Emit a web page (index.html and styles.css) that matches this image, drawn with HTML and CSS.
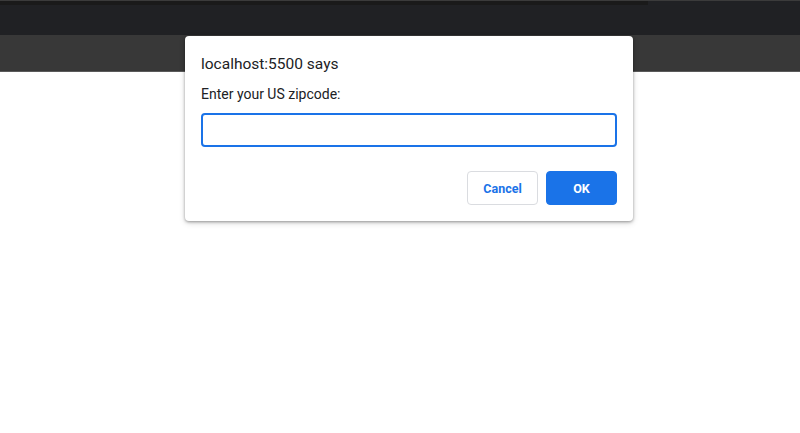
FILE: index.html
```html
<!DOCTYPE html>
<html>
<head>
<meta charset="utf-8">
<link rel="stylesheet" href="styles.css">
</head>
<body>
<div class="chrome">
  <div class="tabstrip"><div class="tabline"></div></div>
  <div class="toolbar"></div>
</div>
<div class="page"></div>
<div class="dialog">
  <div class="title">localhost:5500 says</div>
  <div class="message">Enter your US zipcode:</div>
  <input class="field" type="text">
  <div class="buttons">
    <button class="btn cancel">Cancel</button>
    <button class="btn ok">OK</button>
  </div>
</div>
</body>
</html>
```
FILE: styles.css
```css
html, body {
  margin: 0;
  padding: 0;
  background: #ffffff;
  font-family: "Roboto", "Noto Sans", sans-serif;
}
.chrome {
  display: flex;
  flex-direction: column;
}
.tabstrip {
  height: 35px;
  background: #202124;
  border-top: 1px solid #3b3b3b;
  box-sizing: border-box;
}
.tabline {
  width: 648px;
  height: 4px;
  background: #1a1a1a;
}
.toolbar {
  height: 36px;
  background: #383838;
  border-bottom: 1px solid #5a5a5a;
}
.dialog {
  position: absolute;
  left: 185px;
  top: 36px;
  width: 448px;
  box-sizing: border-box;
  padding: 16px 16px 16px 16px;
  background: #ffffff;
  border-radius: 4px;
  box-shadow: 0 1px 3px rgba(0,0,0,0.35), 0 2px 6px rgba(0,0,0,0.15);
  display: flex;
  flex-direction: column;
}
.title {
  font-size: 15.5px;
  color: #202124;
  line-height: 24px;
}
.message {
  font-size: 14px;
  color: #202124;
  line-height: 20px;
  margin-top: 8px;
}
.field {
  margin: 9px 0 0 0;
  height: 34px;
  width: 416px;
  box-sizing: border-box;
  border: 2px solid #1a73e8;
  border-radius: 4px;
  outline: none;
  padding: 0 8px;
}
.buttons {
  display: flex;
  justify-content: flex-end;
  gap: 8px;
  margin-top: 24px;
}
.btn {
  width: 71px;
  height: 34px;
  box-sizing: border-box;
  border-radius: 4px;
  font-family: inherit;
  font-size: 12.5px;
  font-weight: 700;
  padding: 0;
}
.cancel {
  background: #ffffff;
  color: #1a73e8;
  border: 1px solid #dadce0;
}
.ok {
  background: #1a73e8;
  color: #ffffff;
  border: 1px solid #1a73e8;
}
```
